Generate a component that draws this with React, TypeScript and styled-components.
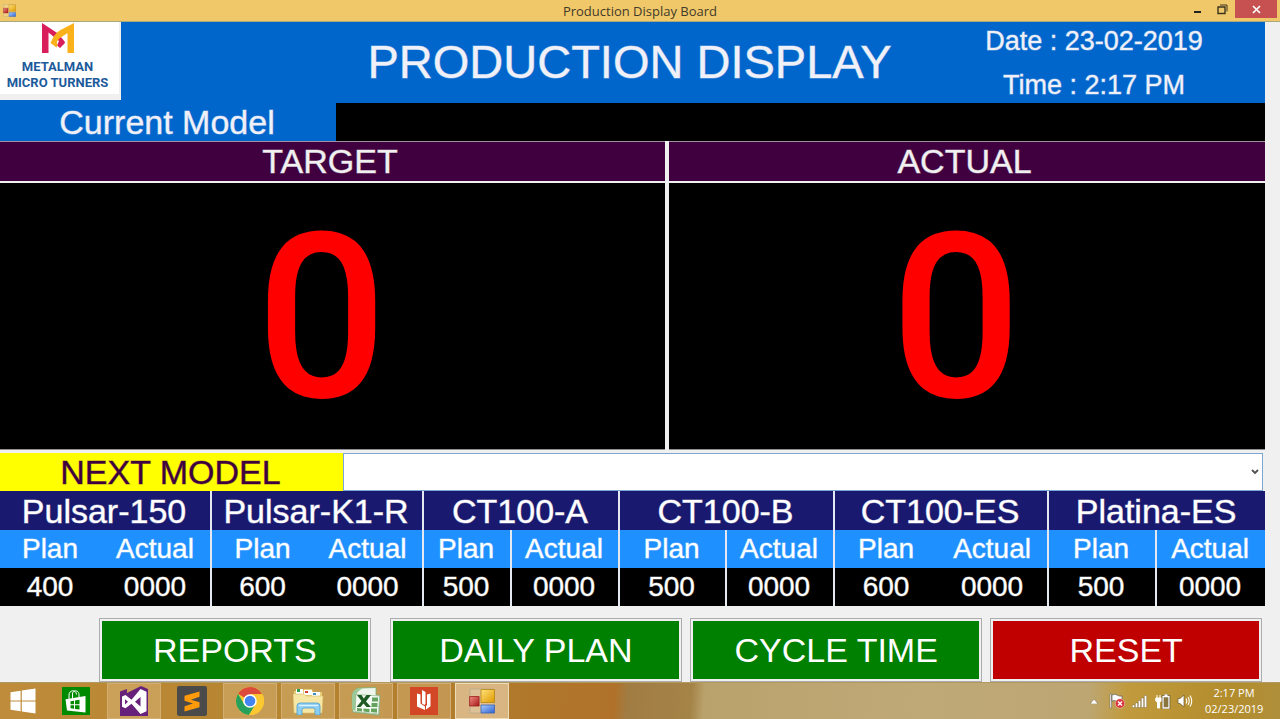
import React from "react";
import styled, { createGlobalStyle, css } from "styled-components";

const sans = `"Liberation Sans", Arial, sans-serif`;
const ui = `"Open Sans", "Noto Sans", sans-serif`;

const GlobalStyle = createGlobalStyle`
  * { box-sizing: border-box; }
  body { margin: 0; background: #f0f0f0; font-family: ${sans}; }
  h1, h2, p { margin: 0; font-weight: 400; }
  button { font: inherit; padding: 0; border: 0; background: none; }
`;

/* Labels on the board are a little heavier than the regular weight. */
const sturdy = css`
  -webkit-text-stroke: 1px color-mix(in srgb, currentColor 45%, transparent);
`;

const Desktop = styled.div`
  display: flex;
  flex-direction: column;
  min-height: 100vh;
`;

/* ---------- window frame ---------- */

const TitleBar = styled.header`
  display: grid;
  grid-template-columns: 140px 1fr 140px;
  height: 22px;
  background: #f0c869;
  border-bottom: 1px solid #a8a878;
`;

const TitleIcon = styled.div`
  padding: 4px 3px;
  line-height: 0;
`;

const WindowTitle = styled.div`
  font: 13px/22px ${ui};
  color: #3f3a2a;
  text-align: center;
`;

const WindowControls = styled.div`
  display: flex;
  justify-content: flex-end;
  padding-right: 3px;
`;

const WindowButton = styled.button<{ $close?: boolean }>`
  display: flex;
  align-items: center;
  justify-content: center;
  width: ${(p) => (p.$close ? 42 : 25)}px;
  height: 18px;
  background: ${(p) => (p.$close ? "#c75050" : "transparent")};
`;

const Form = styled.main`
  display: flex;
  flex-direction: column;
  flex: 1;
  padding-right: 15px;
`;

/* ---------- banner ---------- */

const Banner = styled.section`
  display: grid;
  grid-template-columns: 336px 1fr 342px;
  height: 81px;
  background: #0066cc;
  color: #f0f0f8;
`;

const Logo = styled.div`
  display: flex;
  flex-direction: column;
  align-items: center;
  width: 121px;
  height: 78px;
  padding: 1px 4px 0 0;
  background: #fff;
  border-right: 2px solid #f0f0f0;
  border-bottom: 6px solid #f0f0f0;
  font: 700 13px/16px Roboto, ${sans};
  color: #1c5a9c;
  text-align: center;
  white-space: nowrap;
`;

const LogoMark = styled.svg`
  display: block;
  margin-bottom: 6px;
`;

const BannerTitle = styled.h1`
  font-size: 47px;
  line-height: 80px;
  text-align: center;
  white-space: nowrap;
  ${sturdy}
`;

const DateTime = styled.div`
  font-size: 27px;
  line-height: 44px;
  padding-bottom: 1px;
  display: flex;
  flex-direction: column;
  justify-content: center;
  height: 82px;
  text-align: center;
  ${sturdy}
`;

const CurrentRow = styled.section`
  display: grid;
  grid-template-columns: 336px 1fr;
  height: 38px;
`;

const CurrentLabel = styled.label`
  padding-right: 2px;
  background: #0066cc;
  color: #f0f0f8;
  font-size: 34px;
  line-height: 38px;
  text-align: center;
  ${sturdy}
`;

const CurrentValue = styled.output`
  background: #000;
`;

/* ---------- counters ---------- */

const Counters = styled.section`
  display: grid;
  grid-template-columns: 665fr 596fr;
  column-gap: 4px;
  flex: 1;
  margin-bottom: 3px;
`;

const Counter = styled.article`
  display: flex;
  flex-direction: column;
`;

const CounterTitle = styled.h2`
  height: 42px;
  padding-right: 5px;
  background: #400040;
  border-top: 1px solid #a090a0;
  border-bottom: 2px solid #f0f0f0;
  color: #f0f0f0;
  font-size: 34px;
  line-height: 39px;
  text-align: center;
  ${sturdy}
`;

const CounterValue = styled.div`
  display: flex;
  flex: 1;
  align-items: center;
  justify-content: center;
  min-height: 240px;
  padding: 6px 22px 0 0;
  background: #000;
  border-bottom: 1px solid #909090;
  color: #ff0000;
  font: 500 230px/240px Roboto, ${sans};
`;

/* ---------- next model ---------- */

const NextRow = styled.section`
  display: grid;
  grid-template-columns: 343px 1fr;
  height: 38px;
  padding-right: 2px;
`;

const NextLabel = styled.label`
  padding-right: 2px;
  background: #ffff00;
  color: #400040;
  font-size: 34px;
  line-height: 38px;
  text-align: center;
  ${sturdy}
`;

const SelectBox = styled.div`
  display: grid;
  align-items: center;
  justify-items: end;
  & > * { grid-area: 1 / 1; }
`;

const Chevron = styled.svg`
  margin-right: 4px;
  pointer-events: none;
`;

const ModelSelect = styled.select`
  appearance: none;
  width: 100%;
  height: 100%;
  background: #fff;
  border: 1px solid #7aa7d8;
  border-radius: 0;
  font: 28px ${sans};
`;

/* ---------- model table ---------- */

const ModelTable = styled.table`
  width: 100%;
  table-layout: fixed;
  border-collapse: separate;
  border-spacing: 0;
  text-align: center;
  color: #fff;
`;

const cell = css<{ $line?: boolean }>`
  padding: 0 2px 0 0;
  font-weight: 400;
  line-height: 38px;
  white-space: nowrap;
  border-right: ${(p) => (p.$line ? "2px solid #e4e8f0" : "0")};
  ${sturdy}
`;

const ModelName = styled.th<{ $line?: boolean }>`
  ${cell}
  height: 39px;
  background: #191970;
  font-size: 34px;
`;

const ColumnName = styled.th<{ $line?: boolean }>`
  ${cell}
  height: 38px;
  background: #1e90ff;
  font-size: 28px;
`;

const Count = styled.td<{ $line?: boolean }>`
  ${cell}
  height: 38px;
  background: #000;
  font-size: 28px;
`;

/* ---------- actions ---------- */

const Actions = styled.section`
  display: flex;
  height: 76px;
  padding: 12px 3px 0 99px;
`;

const ActionButton = styled.button<{ $grow: number; $gap?: number; $red?: boolean }>`
  flex: ${(p) => p.$grow} 1 0;
  margin-left: ${(p) => p.$gap ?? 0}px;
  padding: 2px;
  border: 1px solid #adadad;
  background: ${(p) => (p.$red ? "#c00000" : "#008000")} content-box;
  color: #fff;
  font-size: 34px;
  line-height: 58px;
  white-space: nowrap;
`;

/* ---------- taskbar ---------- */

const Taskbar = styled.footer`
  display: flex;
  align-items: stretch;
  justify-content: space-between;
  height: 37px;
  border-top: 1px solid #b09a60;
  background: linear-gradient(
    94deg,
    #be8c3a 0, #b5842f 24%, #b0792b 40%, #b0722a 48%, #a17c42 49%, #a58448 54%,
    #baa26c 55%, #bfa977 72%, #bda672 85%, #c09a3c 88%, #b38d2c 96%, #b08f3c 100%
  );
`;

const TaskGroup = styled.nav`
  display: flex;
  gap: 4px;
`;

const TaskButton = styled.button<{ $w?: number; $open?: boolean; $active?: boolean }>`
  display: flex;
  align-items: center;
  justify-content: center;
  width: ${(p) => p.$w ?? 54}px;
  border: 1px solid
    ${(p) => (p.$active ? "#ecdcb8" : p.$open ? "#d3ae74" : "transparent")};
  background: ${(p) =>
    p.$active ? "rgba(255,240,215,.5)" : p.$open ? "rgba(255,235,200,.24)" : "transparent"};
`;

const Tray = styled.div`
  display: flex;
  align-items: center;
  padding-right: 17px;
`;

const TrayButton = styled.button<{ $w?: number }>`
  display: flex;
  align-items: center;
  justify-content: center;
  width: ${(p) => p.$w ?? 23}px;
  height: 24px;
`;

const Clock = styled.button`
  width: 58px;
  margin-left: 10px;
  font: 11px/16px ${ui};
  color: #fff;
  text-align: center;
  white-space: nowrap;
`;

const FormsIcon = ({ size }: { size: number }) => (
  <svg width={size} height={size} viewBox="0 0 26 26" aria-hidden="true">
    <defs>
      <linearGradient id="fy" x1="0" y1="0" x2="1" y2="1"><stop offset="0" stopColor="#ffe27a" /><stop offset="1" stopColor="#e09a00" /></linearGradient>
      <linearGradient id="fr" x1="0" y1="0" x2="1" y2="1"><stop offset="0" stopColor="#f08a80" /><stop offset="1" stopColor="#a81818" /></linearGradient>
      <linearGradient id="fb" x1="0" y1="0" x2="1" y2="1"><stop offset="0" stopColor="#a8ccff" /><stop offset="1" stopColor="#2f62d0" /></linearGradient>
    </defs>
    <path d="M1 1h24v24H1z" fill="#fff" fillOpacity=".16" stroke="#b5a88c" strokeWidth=".7" />
    <path d="M12 1.500h13.500v13H12z" fill="url(#fy)" stroke="#b98410" strokeWidth=".8" />
    <path d="M.6 8.500h9.500v9.500H.6z" fill="url(#fr)" stroke="#9a2020" strokeWidth=".8" />
    <path d="M12 17h13.500v8H12z" fill="url(#fb)" stroke="#3a62b0" strokeWidth=".8" />
  </svg>
);

const StartIcon = () => (
  <svg width="26" height="26" viewBox="0 0 26 26" fill="#fff" aria-hidden="true">
    <path d="M.5 4.200 10.600 2.700v9.700H.5zM11.800 2.500 25.500.6v11.800H11.800zM.5 13.500h10.100v9.700L.5 21.700zM11.800 13.500h13.700v11.900l-13.700-2z" />
  </svg>
);

const StoreIcon = () => (
  <svg width="28" height="28" viewBox="0 0 28 28" aria-hidden="true">
    <path d="M0 0h28v28H0z" fill="#008a00" />
    <path d="M7 12V8C7 3 14 2 14.500 7.500M10.500 11.500V7c0-4.500 6.500-4 6.500.5V10" fill="none" stroke="#fff" strokeWidth="1" />
    <path d="M3.500 12.300 23.500 9v16.500L5 23.500z" fill="#fff" />
    <path d="M8.500 14.300 12 13.700v3.600H8.500zM13 13.500l4.500-.7v4.500H13zM8.500 18.200H12v3.500l-3.500-.4zM13 18.200h4.500v4.300l-4.500-.6z" fill="#008a00" />
  </svg>
);

const VisualStudioIcon = () => (
  <svg width="28" height="30" viewBox="0 0 28 30" aria-hidden="true">
    <path d="M0 5.500 7 3v4l14-7 7 3v27H0z" fill="#68217a" />
    <path d="M2 10.500 5.500 9l6 4.700L20.500 3l6 2.800v19.400L20.500 28l-9-10.300-6 4.600-3.500-1.500zm3 2.700v5.200l3-2.600zm15.500-2.200-5.500 4.700 5.500 4.800z" fill="#fff" fillRule="evenodd" />
  </svg>
);

const SublimeIcon = () => (
  <svg width="30" height="30" viewBox="0 0 30 30" aria-hidden="true">
    <rect width="30" height="30" rx="2" fill="#4a4a4a" />
    <path d="M22.500 5.500v5.300l-8.500 3 8.500 2.500v5L7.500 25.500v-5.300l8.500-2.700-8.500-2.700V9.800z" fill="#ff9a0a" />
  </svg>
);

const ChromeIcon = () => (
  <svg width="28" height="28" viewBox="0 0 28 28" aria-hidden="true">
    <circle cx="14" cy="14" r="14" fill="#fbc831" />
    <path d="M14 14 2 6.800A14 14 0 0 1 26.200 7.200H14z" fill="#dc4a3c" />
    <path d="M2 6.800A14 14 0 0 0 13 28l7-10.500L14 14 8 17z" fill="#27a05b" />
    <path d="M14 7.200h12.200A14 14 0 0 1 13 28l6.500-11z" fill="#fbc831" />
    <circle cx="14" cy="14" r="6.800" fill="#fff" />
    <circle cx="14" cy="14" r="5.300" fill="#4484f0" />
  </svg>
);

const ExplorerIcon = () => (
  <svg width="31" height="28" viewBox="0 0 31 28" aria-hidden="true">
    <path d="M1 4h9l1-2h8l1 3h9v20H1z" fill="#e7cf78" />
    <path d="M3 2h7v5H3zM11 3h8v5h-8zM19 5h8v4h-8z" fill="#fff" />
    <path d="M4 2h3v3H4z" fill="#2b9d49" /><path d="M12 4h3v2h-3z" fill="#d0452c" /><path d="M20 6h3v2h-3z" fill="#3a8ed0" />
    <path d="M0 7h11l2 2h17l-1 17H1z" fill="#f6e7a4" stroke="#d8bd68" strokeWidth=".6" />
    <path d="M4 28v-9q0-3 3-3h17q3 0 3 3v9h-5v-5q0-2-2-2h-9q-2 0-2 2v5z" fill="#8ccdf0" stroke="#4c9fd0" strokeWidth=".8" />
    <path d="M6 18.500h19" stroke="#d8f2ff" strokeWidth="1.400" />
  </svg>
);

const ExcelIcon = () => (
  <svg width="30" height="29" viewBox="0 0 30 29" aria-hidden="true">
    <path d="M8 1 25 .5V8l4 .5L28 28 2 25 1 9Q2 2 8 1z" fill="#eef5ea" stroke="#77ab72" strokeWidth=".8" />
    <path d="M1 22V9Q2 2 8 1l4 .2Q6 4 5 9v15z" fill="#9cc796" />
    <path d="M5 7.500 28.500 9l-1 18L4 24.500z" fill="#f8fcf6" stroke="#8db58a" strokeWidth=".7" />
    <path d="M21 10.500h6v4h-6zM20.500 16h6v4h-6zM6 21l5 .5v3L6 24zM12.500 21.500l6 .5v3.200l-6-.6zM20 21.500h6v4.200l-6-.6z" fill="#63a35e" />
    <path d="M6 8h4.500l2.300 3.500L15.500 8H20l-5 6.500 5 5.500h-4.500l-3-3.500L9.500 20h-4l5-6z" fill="#1f5b22" />
  </svg>
);

const ReaderIcon = () => (
  <svg width="28" height="28" viewBox="0 0 28 28" aria-hidden="true">
    <path d="M0 0h28v28H0z" fill="#d34727" />
    <path d="M7 6.500l3.500 1v9l4.500 3V23L7 19.500zM12 3l3.500 2v11.500l-1 1.500-2.500-1.500zM17 7.500 20.500 6.500v12.800L16 22.500V19l1-1z" fill="#fff" />
  </svg>
);

const models = [
  { name: "Pulsar-150", plan: "400", widths: [102, 110], split: false },
  { name: "Pulsar-K1-R", plan: "600", widths: [103, 109], split: false },
  { name: "CT100-A", plan: "500", widths: [88, 108], split: true },
  { name: "CT100-B", plan: "500", widths: [107, 108], split: true },
  { name: "CT100-ES", plan: "600", widths: [104, 110], split: false },
  { name: "Platina-ES", plan: "500", widths: [108, 108], split: true },
];
const last = models.length - 1;

export default function App() {
  return (
    <Desktop>
      <GlobalStyle />
      <TitleBar>
        <TitleIcon><FormsIcon size={13} /></TitleIcon>
        <WindowTitle>Production Display Board</WindowTitle>
        <WindowControls>
          <WindowButton aria-label="Minimize">
            <svg width="9" height="12"><path d="M1 8h7v2H1z" fill="#222" /></svg>
          </WindowButton>
          <WindowButton aria-label="Restore">
            <svg width="11" height="11" fill="none" stroke="#3c3420"><path d="M1 3h7v6.500H1z" strokeWidth="1.400" /><path d="M3 1h7v6.500" /></svg>
          </WindowButton>
          <WindowButton $close aria-label="Close">
            <svg width="9" height="9"><path d="M1 1l7 7M8 1 1 8" stroke="#fff" strokeWidth="1.700" /></svg>
          </WindowButton>
        </WindowControls>
      </TitleBar>

      <Form>
        <Banner>
          <Logo>
            <LogoMark width="32" height="30" viewBox="0 0 32 30" aria-hidden="true">
              <path d="M0 0 16 10.500 23 19q0 1.500-2 3l-3 3-3-2.500 2-4.500L6.500 9.500V30H0z" fill="#d81f5c" />
              <path d="M32 0v30h-6.500V10L18 15q-4.500 3.500-2.500 7l-1 2.500L8.500 20q4-10 10-13z" fill="#fbb21a" />
            </LogoMark>
            <span>METALMAN</span>
            <span>MICRO TURNERS</span>
          </Logo>
          <BannerTitle>PRODUCTION DISPLAY</BannerTitle>
          <DateTime>
            <p>Date : 23-02-2019</p>
            <p>Time : 2:17 PM</p>
          </DateTime>
        </Banner>

        <CurrentRow>
          <CurrentLabel htmlFor="current">Current Model</CurrentLabel>
          <CurrentValue id="current" />
        </CurrentRow>

        <Counters>
          <Counter>
            <CounterTitle>TARGET</CounterTitle>
            <CounterValue>0</CounterValue>
          </Counter>
          <Counter>
            <CounterTitle>ACTUAL</CounterTitle>
            <CounterValue>0</CounterValue>
          </Counter>
        </Counters>

        <NextRow>
          <NextLabel htmlFor="next">NEXT MODEL</NextLabel>
          <SelectBox>
            <ModelSelect id="next" defaultValue="">
              <option value="" />
              {models.map((m) => <option key={m.name}>{m.name}</option>)}
            </ModelSelect>
            <Chevron width="8" height="6" aria-hidden="true">
              <path d="M1 1l3 3 3-3" fill="none" stroke="#505050" strokeWidth="1.800" />
            </Chevron>
          </SelectBox>
        </NextRow>

        <ModelTable>
          <colgroup>
            {models.flatMap((m) => m.widths.map((w, i) => <col key={m.name + i} width={w} />))}
          </colgroup>
          <thead>
            <tr>
              {models.map((m, i) => (
                <ModelName key={m.name} colSpan={2} scope="colgroup" $line={i < last}>{m.name}</ModelName>
              ))}
            </tr>
            <tr>
              {models.map((m, i) => (
                <React.Fragment key={m.name}>
                  <ColumnName scope="col" $line={m.split}>Plan</ColumnName>
                  <ColumnName scope="col" $line={i < last}>Actual</ColumnName>
                </React.Fragment>
              ))}
            </tr>
          </thead>
          <tbody>
            <tr>
              {models.map((m, i) => (
                <React.Fragment key={m.name}>
                  <Count $line={m.split}>{m.plan}</Count>
                  <Count $line={i < last}>0000</Count>
                </React.Fragment>
              ))}
            </tr>
          </tbody>
        </ModelTable>

        <Actions>
          <ActionButton $grow={271}>REPORTS</ActionButton>
          <ActionButton $grow={292} $gap={19}>DAILY PLAN</ActionButton>
          <ActionButton $grow={292} $gap={8}>CYCLE TIME</ActionButton>
          <ActionButton $grow={271} $gap={8} $red>RESET</ActionButton>
        </Actions>
      </Form>

      <Taskbar>
        <TaskGroup aria-label="Taskbar">
          <TaskButton $w={45} aria-label="Start"><StartIcon /></TaskButton>
          <TaskButton aria-label="Store"><StoreIcon /></TaskButton>
          <TaskButton $open aria-label="Visual Studio"><VisualStudioIcon /></TaskButton>
          <TaskButton aria-label="Sublime Text"><SublimeIcon /></TaskButton>
          <TaskButton $open aria-label="Chrome"><ChromeIcon /></TaskButton>
          <TaskButton $open aria-label="File Explorer"><ExplorerIcon /></TaskButton>
          <TaskButton $open aria-label="Excel"><ExcelIcon /></TaskButton>
          <TaskButton $open aria-label="Reader"><ReaderIcon /></TaskButton>
          <TaskButton $open $active aria-label="Production Display Board"><FormsIcon size={26} /></TaskButton>
        </TaskGroup>
        <Tray>
          <TrayButton aria-label="Show hidden icons">
            <svg width="8" height="5"><path d="M0 5 4 0l4 5z" fill="#fff" stroke="#7a6a48" strokeWidth=".5" /></svg>
          </TrayButton>
          <TrayButton aria-label="Action Center">
            <svg width="16" height="16" viewBox="0 0 16 16">
              <path d="M1 1h1.500v14H1z" fill="#fff" stroke="#5c5c5c" strokeWidth=".5" />
              <path d="M3 2q3-1.500 5 0t5 1v6q-3 1-5-.5T3 8z" fill="#fff" stroke="#5c5c5c" strokeWidth=".7" />
              <circle cx="11" cy="10.500" r="4.700" fill="#d9343a" stroke="#f3c8c0" strokeWidth=".6" />
              <path d="M9 8.500l4 4M13 8.500l-4 4" stroke="#fff" strokeWidth="1.400" />
            </svg>
          </TrayButton>
          <TrayButton aria-label="Network">
            <svg width="16" height="13" viewBox="0 0 16 13" fill="#fff" stroke="#6b5a34" strokeWidth=".4">
              <path d="M.3 10h2.400v2.500H.3zM3.300 8h2.400v4.500H3.300zM6.300 5.500h2.400v7H6.300zM9.300 3h2.400v9.500H9.300zM12.300.5h2.400v12h-2.400z" />
            </svg>
          </TrayButton>
          <TrayButton aria-label="Power">
            <svg width="16" height="15" viewBox="0 0 16 15">
              <path d="M2 1v3M5 1v3M.8 4h5.400v3L4.500 8.500V14h-2V8.500L.8 7z" fill="#fff" stroke="#fff" />
              <path d="M8 2.500h6V14H8zM9.500 1h3" fill="none" stroke="#443a20" strokeWidth="2.400" />
              <path d="M8 2.500h6V14H8zM9.500 1h3" fill="#8a7440" stroke="#fff" strokeWidth="1.300" />
            </svg>
          </TrayButton>
          <TrayButton $w={21} aria-label="Volume">
            <svg width="16" height="14" viewBox="0 0 16 14" fill="none" stroke="#fff">
              <path d="M1 4.500h2L7 1v12L3 9.500H1z" fill="#fff" stroke="#6b5a34" strokeWidth=".7" />
              <path d="M9 4.500q1.500 2.500 0 5M11 3q2.500 4 0 8M13 1.500q3.500 5.500 0 11" strokeWidth="1.100" />
            </svg>
          </TrayButton>
          <Clock>2:17 PM<br />02/23/2019</Clock>
        </Tray>
      </Taskbar>
    </Desktop>
  );
}
